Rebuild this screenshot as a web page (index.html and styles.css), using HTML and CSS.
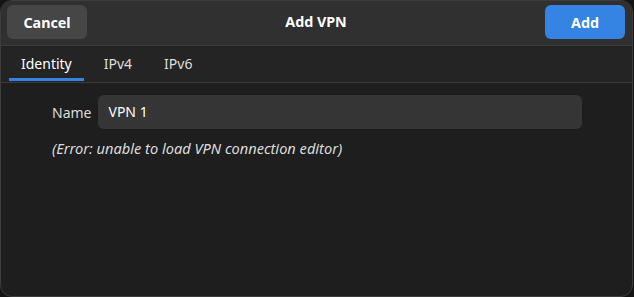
FILE: index.html
```html
<!DOCTYPE html>
<html>
<head>
<meta charset="utf-8">
<link rel="stylesheet" href="styles.css">
</head>
<body>
<div class="dialog">
  <header class="headerbar">
    <button class="btn btn-cancel">Cancel</button>
    <div class="title">Add VPN</div>
    <button class="btn btn-add">Add</button>
  </header>
  <nav class="tabs">
    <div class="tab active">Identity</div>
    <div class="tab">IPv4</div>
    <div class="tab">IPv6</div>
  </nav>
  <main class="content">
    <div class="row">
      <label class="label">Name</label>
      <div class="entry">VPN 1</div>
    </div>
    <div class="error">(Error: unable to load VPN connection editor)</div>
  </main>
</div>
</body>
</html>
```
FILE: styles.css
```css
html, body {
  margin: 0;
  padding: 0;
  background: #141414;
  width: 634px;
  height: 297px;
  overflow: hidden;
}
body {
  font-family: "Noto Sans", "Open Sans", sans-serif;
  font-size: 14px;
  color: #ffffff;
}
.dialog {
  box-sizing: border-box;
  width: 633px;
  height: 297px;
  border: 1px solid #3d3d3d;
  border-radius: 12px;
  background: #1e1e1e;
  overflow: hidden;
  display: flex;
  flex-direction: column;
}
.headerbar {
  flex: 0 0 auto;
  height: 40px;
  background: #303030;
  border-bottom: 1px solid #3c3c3c;
  display: flex;
  align-items: flex-start;
  justify-content: space-between;
  padding: 4px 7px 0 6px;
}
.btn {
  font-family: inherit;
  font-size: 14.3px;
  font-weight: 700;
  color: #ffffff;
  border: none;
  border-radius: 6px;
  height: 34px;
  width: 80px;
  padding: 0;
}
.btn-cancel { background: #464646; }
.btn-add { background: #3584e4; }
.title {
  font-weight: 700;
  font-size: 14.3px;
  line-height: 34px;
}
.tabs {
  flex: 0 0 auto;
  height: 36px;
  background: #242424;
  border-bottom: 1px solid #3a3a3a;
  display: flex;
  padding-left: 8px;
}
.tab {
  position: relative;
  padding: 0 12px;
  line-height: 36px;
  color: #dedede;
  margin-right: 8px;
}
.tab.active { color: #ffffff; }
.tab.active::after {
  content: "";
  position: absolute;
  left: 0;
  right: 0;
  bottom: 1px;
  height: 3px;
  background: #3584e4;
}
.content {
  padding: 12px 0 0 51px;
}
.row {
  display: flex;
  align-items: center;
}
.label {
  color: #dcdcdc;
  margin-right: 7px;
}
.entry {
  width: 474px;
  height: 34px;
  line-height: 34px;
  padding-left: 10px;
  background: #353535;
  border-radius: 6px;
  color: #ffffff;
}
.error {
  margin-top: 9px;
  font-style: italic;
  font-size: 14.6px;
  color: #dcdcdc;
}
```
